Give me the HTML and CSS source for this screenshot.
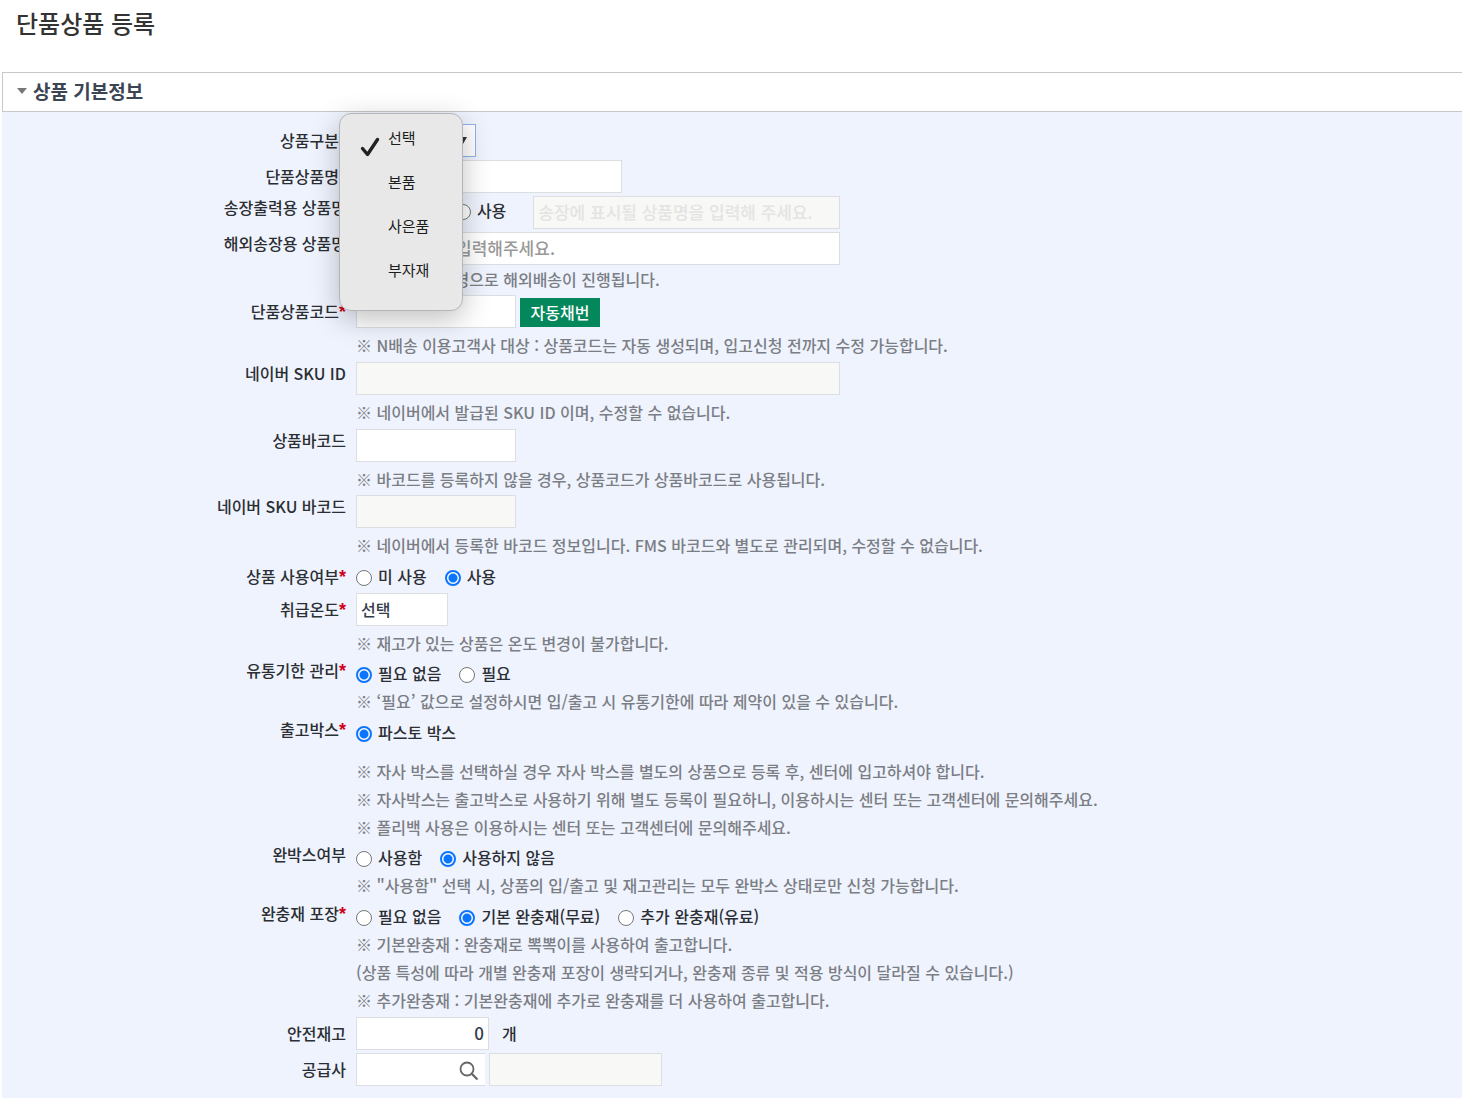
FILE: index.html
```html
<!DOCTYPE html>
<html lang="ko">
<head>
    <meta charset="UTF-8">
    <meta name="viewport" content="width=device-width, initial-scale=1.0">
    <title>단품상품 등록</title>
    <link rel="stylesheet" href="styles.css">
</head>
<body>
    <h1>단품상품 등록</h1>
    <section class="panel">
        <h2><span class="caret"></span>상품 기본정보</h2>
        <form class="form">
            <div class="row">
                <label class="name middle" for="kind">상품구분<em>*</em></label>
                <div class="field">
                    <div class="select-box">
                        <select id="kind" class="kind">
                            <option>선택</option>
                            <option>본품</option>
                            <option>사은품</option>
                            <option>부자재</option>
                        </select>
                        <svg class="arrow" width="8" height="7" viewBox="0 0 8 7"><path d="M0 0h8L4 7z" fill="#333"/></svg>
                        <ul class="menu" role="listbox" aria-label="상품구분">
                            <li role="option" aria-selected="true">
                                <svg class="check" width="20" height="20" viewBox="0 0 20 20"><path d="M2.500 11.500l5 6L17.500 2.500" fill="none" stroke="#222" stroke-width="3.400" stroke-linecap="round" stroke-linejoin="round"/></svg>선택
                            </li>
                            <li role="option">본품</li>
                            <li role="option">사은품</li>
                            <li role="option">부자재</li>
                        </ul>
                    </div>
                </div>
            </div>
            <div class="row">
                <label class="name middle" for="itemName">단품상품명<em>*</em></label>
                <div class="field"><input type="text" id="itemName" class="w-name"></div>
            </div>
            <div class="row">
                <span class="name">송장출력용 상품명</span>
                <div class="field">
                    <div class="line top">
                        <label class="radio"><input type="radio" name="invoice" checked>사용안함</label>
                        <label class="radio"><input type="radio" name="invoice">사용</label>
                        <input type="text" class="w-invoice" aria-label="송장출력용 상품명" placeholder="송장에 표시될 상품명을 입력해 주세요." disabled>
                    </div>
                </div>
            </div>
            <div class="row short">
                <label class="name" for="globalName">해외송장용 상품명</label>
                <div class="field">
                    <input type="text" id="globalName" class="w-long" placeholder="상품명(영문) 입력해주세요.">
                    <p class="hint">※ 입력된 영문명으로 해외배송이 진행됩니다.</p>
                </div>
            </div>
            <div class="row">
                <label class="name middle" for="itemCode">단품상품코드<em>*</em></label>
                <div class="field">
                    <div class="line tight">
                        <input type="text" id="itemCode" class="w-code">
                        <button type="button" class="btn">자동채번</button>
                    </div>
                    <p class="hint spaced">※ N배송 이용고객사 대상 : 상품코드는 자동 생성되며, 입고신청 전까지 수정 가능합니다.</p>
                </div>
            </div>
            <div class="row">
                <label class="name" for="skuId">네이버 SKU ID</label>
                <div class="field">
                    <input type="text" id="skuId" class="w-long" disabled>
                    <p class="hint spaced">※ 네이버에서 발급된 SKU ID 이며, 수정할 수 없습니다.</p>
                </div>
            </div>
            <div class="row short">
                <label class="name" for="barcode">상품바코드</label>
                <div class="field">
                    <input type="text" id="barcode" class="w-code">
                    <p class="hint spaced">※ 바코드를 등록하지 않을 경우, 상품코드가 상품바코드로 사용됩니다.</p>
                </div>
            </div>
            <div class="row">
                <label class="name" for="skuBarcode">네이버 SKU 바코드</label>
                <div class="field">
                    <input type="text" id="skuBarcode" class="w-code" disabled>
                    <p class="hint spaced">※ 네이버에서 등록한 바코드 정보입니다. FMS 바코드와 별도로 관리되며, 수정할 수 없습니다.</p>
                </div>
            </div>
            <div class="row">
                <span class="name inline">상품 사용여부<em>*</em></span>
                <div class="field">
                    <div class="line">
                        <label class="radio"><input type="radio" name="use">미 사용</label>
                        <label class="radio"><input type="radio" name="use" checked>사용</label>
                    </div>
                </div>
            </div>
            <div class="row short">
                <label class="name middle" for="temp">취급온도<em>*</em></label>
                <div class="field">
                    <select id="temp" class="w-temp"><option>선택</option></select>
                    <p class="hint spaced">※ 재고가 있는 상품은 온도 변경이 불가합니다.</p>
                </div>
            </div>
            <div class="row">
                <span class="name">유통기한 관리<em>*</em></span>
                <div class="field">
                    <div class="line">
                        <label class="radio"><input type="radio" name="expiry" checked>필요 없음</label>
                        <label class="radio"><input type="radio" name="expiry">필요</label>
                    </div>
                    <p class="hint">※ ‘필요’ 값으로 설정하시면 입/출고 시 유통기한에 따라 제약이 있을 수 있습니다.</p>
                </div>
            </div>
            <div class="row short">
                <span class="name">출고박스<em>*</em></span>
                <div class="field">
                    <div class="line">
                        <label class="radio"><input type="radio" name="box" checked>파스토 박스</label>
                    </div>
                    <div class="hints">
                        <p class="hint">※ 자사 박스를 선택하실 경우 자사 박스를 별도의 상품으로 등록 후, 센터에 입고하셔야 합니다.</p>
                        <p class="hint">※ 자사박스는 출고박스로 사용하기 위해 별도 등록이 필요하니, 이용하시는 센터 또는 고객센터에 문의해주세요.</p>
                        <p class="hint">※ 폴리백 사용은 이용하시는 센터 또는 고객센터에 문의해주세요.</p>
                    </div>
                </div>
            </div>
            <div class="row">
                <span class="name">완박스여부</span>
                <div class="field">
                    <div class="line">
                        <label class="radio"><input type="radio" name="fullBox">사용함</label>
                        <label class="radio"><input type="radio" name="fullBox" checked>사용하지 않음</label>
                    </div>
                    <p class="hint">※ "사용함" 선택 시, 상품의 입/출고 및 재고관리는 모두 완박스 상태로만 신청 가능합니다.</p>
                </div>
            </div>
            <div class="row">
                <span class="name">완충재 포장<em>*</em></span>
                <div class="field">
                    <div class="line">
                        <label class="radio"><input type="radio" name="cushion">필요 없음</label>
                        <label class="radio"><input type="radio" name="cushion" checked>기본 완충재(무료)</label>
                        <label class="radio"><input type="radio" name="cushion">추가 완충재(유료)</label>
                    </div>
                    <p class="hint">※ 기본완충재 : 완충재로 뽁뽁이를 사용하여 출고합니다.</p>
                    <p class="hint">(상품 특성에 따라 개별 완충재 포장이 생략되거나, 완충재 종류 및 적용 방식이 달라질 수 있습니다.)</p>
                    <p class="hint">※ 추가완충재 : 기본완충재에 추가로 완충재를 더 사용하여 출고합니다.</p>
                </div>
            </div>
            <div class="row">
                <label class="name middle" for="stock">안전재고</label>
                <div class="field">
                    <div class="line top">
                        <input type="text" id="stock" class="w-stock" value="0">
                        <span class="unit">개</span>
                    </div>
                </div>
            </div>
            <div class="row">
                <label class="name middle" for="supplier">공급사</label>
                <div class="field">
                    <div class="line tight">
                        <div class="search-box">
                            <input type="text" id="supplier">
                            <button type="button" class="search" aria-label="공급사 검색">
                                <svg width="20" height="20" viewBox="0 0 20 20"><circle cx="8" cy="8" r="6.500" fill="none" stroke="#666" stroke-width="1.800"/><path d="M12.500 12.500L18.500 18.500" stroke="#666" stroke-width="2.200"/></svg>
                            </button>
                        </div>
                        <input type="text" class="w-supplier" aria-label="공급사명" disabled>
                    </div>
                </div>
            </div>
        </form>
    </section>
</body>
</html>
```
FILE: styles.css
```css
* {
    box-sizing: border-box;
}
body {
    margin: 0;
    background: #fff;
    color: #2b2e33;
    font-family: "Noto Sans CJK KR", sans-serif;
    font-size: 16px;
    font-weight: 500;
}
h1 {
    margin: 0;
    padding: 4px 16px 30px;
    font-size: 24px;
    font-weight: 500;
    line-height: 38px;
    color: #333;
}
.panel {
    margin-left: 2px;
}
h2 {
    display: flex;
    align-items: center;
    gap: 6px;
    height: 40px;
    margin: 0;
    padding: 0 0 2px 14px;
    border: 1px solid #c8c8c8;
    border-right: none;
    font-size: 19px;
    font-weight: 700;
    line-height: 38px;
    color: #3b4553;
}
.caret {
    border: 5px solid transparent;
    border-top: 6px solid #777;
    border-bottom: none;
}
.form {
    padding: 12px 0 9px;
    background: #eff3fd;
}
.row {
    display: flex;
    gap: 10px;
    padding-bottom: 3px;
}
.row.short {
    padding-bottom: 2px;
}
.name {
    flex: 0 0 344px;
    text-align: right;
    line-height: 22px;
}
.name.middle {
    line-height: 32px;
}
.name.inline {
    line-height: 28px;
}
.name em {
    color: #d0021b;
    font-family: "Liberation Sans", sans-serif;
    font-size: 18px;
    font-style: normal;
    font-weight: 700;
    line-height: 1;
}
.field {
    flex: 1;
}
.line {
    display: flex;
    align-items: center;
    gap: 18px;
}
.line.top {
    align-items: flex-start;
}
.line.tight {
    gap: 4px;
}
input, select, button {
    font-family: inherit;
    font-weight: inherit;
}
input[type="text"], select {
    display: block;
    height: 33px;
    padding: 0 4px 2px;
    border: 1px solid #dcdee2;
    border-radius: 0;
    background: #fff;
    color: #333c4a;
    font-size: 17px;
}
input[type="text"]::placeholder {
    color: #999;
}
input[type="text"]:disabled {
    background: #f8f8f6;
}
input[type="text"]:disabled::placeholder {
    color: #e3e4e3;
}
select {
    appearance: none;
    font-size: 16px;
}
.w-name { width: 266px; }
input.w-invoice { width: 307px; margin-left: 9px; }
.w-long { width: 484px; }
.w-code { width: 160px; }
.w-temp { width: 92px; }
input.w-stock { width: 133px; text-align: right; }
.w-supplier { width: 173px; }
.unit {
    margin-left: -5px;
    line-height: 32px;
}
.radio {
    display: flex;
    align-items: center;
    gap: 6px;
    line-height: 28px;
}
input[type="radio"] {
    appearance: none;
    width: 16px;
    height: 16px;
    margin: 4px 0 0;
    border: 1px solid #767676;
    border-radius: 50%;
    background: #fff;
}
input[type="radio"]:checked {
    border: 2px solid #0b75ff;
    background: radial-gradient(circle, #0b75ff 4px, #fff 5px);
}
.hint {
    margin: 0;
    line-height: 28px;
    color: #7b7e85;
}
.hint.spaced {
    margin-top: 3px;
}
.hints {
    margin-top: 11px;
}
.btn {
    height: 29px;
    width: 80px;
    margin-top: 2px;
    padding: 0 0 2px;
    border: none;
    background: #03875b;
    color: #fff;
    font-size: 16px;
}
.select-box {
    position: relative;
    width: 120px;
}
select.kind {
    width: 100%;
    border-color: #8fb4ea;
}
.arrow {
    position: absolute;
    right: 9px;
    top: 13px;
}
.menu {
    position: absolute;
    left: -17px;
    top: -11px;
    z-index: 1;
    width: 124px;
    margin: 0;
    padding: 2px 0 18px;
    border: 1px solid #b4b5b9;
    border-radius: 12px;
    background: #e8e8e8;
    box-shadow: 0 8px 28px rgba(0, 0, 0, 0.25);
    list-style: none;
}
.menu li {
    position: relative;
    padding-left: 48px;
    font-size: 15px;
    font-weight: 400;
    line-height: 44px;
    color: #1c1c1c;
}
.check {
    position: absolute;
    left: 20px;
    top: 21px;
}
.search-box {
    display: flex;
    width: 129px;
    height: 33px;
    border: 1px solid #dcdee2;
    border-right: none;
    background: #fff;
}
.search-box input[type="text"] {
    flex: 1;
    width: 0;
    height: 100%;
    border: none;
}
.search {
    width: 32px;
    padding: 6px 0 0;
    border: none;
    background: none;
}
```
